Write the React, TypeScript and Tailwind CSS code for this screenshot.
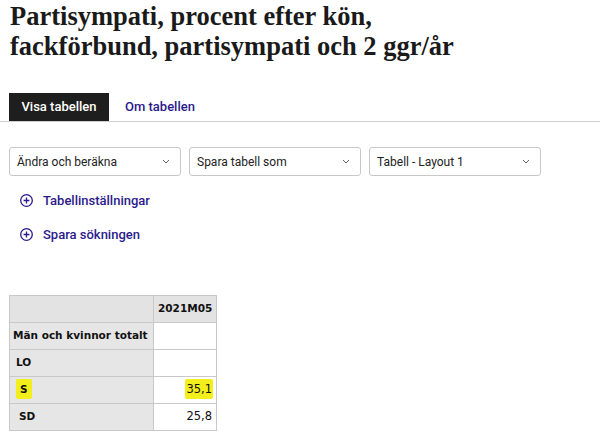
import React from "react";

function Chevron() {
  return (
    <svg width="8" height="5" viewBox="0 0 8 5" fill="none" className="shrink-0">
      <path d="M1 1l3 3 3-3" stroke="#666" strokeWidth="1" />
    </svg>
  );
}

function Select({ label }: { label: string }) {
  return (
    <div className="flex h-[29px] w-[172px] items-center justify-between rounded-[3px] border border-[#c8c8c8] bg-white pl-[7px] pr-[10px] text-[12px] text-[#222]">
      <span>{label}</span>
      <Chevron />
    </div>
  );
}

function PlusLink({ label }: { label: string }) {
  return (
    <div className="flex items-center gap-[10px] pl-[11px] text-[13px] font-medium text-[#2b1a8c]">
      <svg width="13" height="13" viewBox="0 0 13 13" fill="none">
        <circle cx="6.5" cy="6.5" r="5.8" stroke="#2b1a8c" strokeWidth="1.3" />
        <path d="M6.5 3.6v5.8M3.6 6.5h5.8" stroke="#2b1a8c" strokeWidth="1.3" />
      </svg>
      <span>{label}</span>
    </div>
  );
}

export default function App() {
  const cell = "border border-[#c9c9c9] h-[27px] whitespace-nowrap";
  return (
    <div className="h-[445px] w-[600px] overflow-hidden bg-white" style={{ fontFamily: "Roboto, 'Noto Sans', sans-serif" }}>
      <h1
        className="pl-[10px] pt-[1px] text-[26.5px] font-bold leading-[30px] text-[#1a1a1a]"
        style={{ fontFamily: "'Liberation Serif', serif" }}
      >
        Partisympati, procent efter kön,
        <br />
        fackförbund, partisympati och 2 ggr/år
      </h1>

      <div className="mt-[32px] flex border-b border-[#cfcfcf] pl-[9px]">
        <div className="flex h-[28px] w-[100px] items-center justify-center bg-[#1e1e1e] text-[13px] font-medium text-white">
          Visa tabellen
        </div>
        <div className="flex h-[28px] items-center pl-[16px] text-[13px] font-medium text-[#2b1a8c]">Om tabellen</div>
      </div>

      <div className="mt-[25px] flex gap-[8px] pl-[9px]">
        <Select label="Ändra och beräkna" />
        <Select label="Spara tabell som" />
        <Select label="Tabell - Layout 1" />
      </div>

      <div className="mt-[15px] flex flex-col gap-[14px] pl-[9px]">
        <PlusLink label="Tabellinställningar" />
        <PlusLink label="Spara sökningen" />
      </div>

      <table
        className="ml-[9px] mt-[51px] table-fixed border-collapse text-[10.5px] text-[#111]"
        style={{ fontFamily: "'DejaVu Sans', Verdana, sans-serif", width: 207 }}
      >
        <colgroup>
          <col style={{ width: 144 }} />
          <col style={{ width: 63 }} />
        </colgroup>
        <tbody>
          <tr>
            <td className={`${cell} bg-[#e3e3e3]`}></td>
            <td className={`${cell} bg-[#e3e3e3] px-[4px] text-right font-bold`}>2021M05</td>
          </tr>
          <tr>
            <td className={`${cell} bg-[#e6e6e6] pl-[3px] font-bold`}>Män och kvinnor totalt</td>
            <td className={`${cell} bg-white`}></td>
          </tr>
          <tr>
            <td className={`${cell} bg-[#e6e6e6] pl-[6px] font-bold`}>LO</td>
            <td className={`${cell} bg-white`}></td>
          </tr>
          <tr>
            <td className={`${cell} bg-[#e6e6e6] pl-[6px] font-bold`}>
              <span className="rounded-[2px] bg-[#f2ef1c] px-[4px] py-[4px]">S</span>
            </td>
            <td className={`${cell} bg-white pl-[4px] pr-[3px] text-right text-[11.5px]`}>
              <span className="rounded-[2px] bg-[#f2ef1c] px-[1px] py-[3px]">35,1</span>
            </td>
          </tr>
          <tr>
            <td className={`${cell} bg-[#e6e6e6] pl-[9px] font-bold`}>SD</td>
            <td className={`${cell} bg-white px-[4px] text-right text-[11.5px]`}>25,8</td>
          </tr>
        </tbody>
      </table>
    </div>
  );
}
